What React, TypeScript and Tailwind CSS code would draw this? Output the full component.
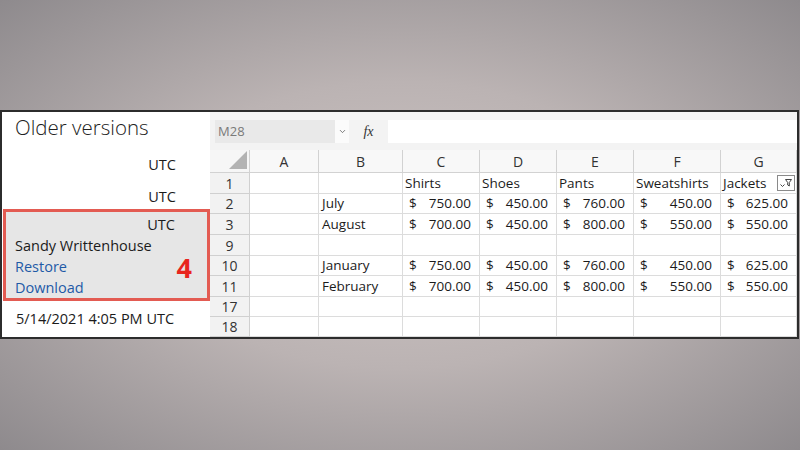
import React from 'react';
import { ChevronDown } from 'lucide-react';

type Row = {
  n: string;
  h: string;
  month?: string;
  header?: boolean;
  values?: string[];
};

const rows: Row[] = [
  { n: '1', h: 'h-[21px]', header: true },
  { n: '2', h: 'h-[20px]', month: 'July', values: ['750.00', '450.00', '760.00', '450.00', '625.00'] },
  { n: '3', h: 'h-[21px]', month: 'August', values: ['700.00', '450.00', '800.00', '550.00', '550.00'] },
  { n: '9', h: 'h-[21px]' },
  { n: '10', h: 'h-[20px]', month: 'January', values: ['750.00', '450.00', '760.00', '450.00', '625.00'] },
  { n: '11', h: 'h-[21px]', month: 'February', values: ['700.00', '450.00', '800.00', '550.00', '550.00'] },
  { n: '17', h: 'h-[20px]' },
  { n: '18', h: 'h-[20px]' },
];

const headers = ['Shirts', 'Shoes', 'Pants', 'Sweatshirts', 'Jackets'];
const cols = ['A', 'B', 'C', 'D', 'E', 'F', 'G'];

const FilterButton = () => (
  <div className="ml-auto mr-[1px] w-[18px] h-[16px] border border-[#8a8a8a] bg-white flex items-center justify-center">
    <svg width="14" height="10" viewBox="0 0 14 10">
      <path d="M1.5 6.5 L3.5 8.5 L5.5 6.5" fill="none" stroke="#444" strokeWidth="1" />
      <path d="M6.5 1.5 H12.5 L10.3 4.5 V8 L8.7 7 V4.5 Z" fill="none" stroke="#444" strokeWidth="1" />
    </svg>
  </div>
);

const Sheet = () => (
  <div className="flex-1 flex flex-col bg-[#f3f3f3] font-['Open_Sans',sans-serif]">
    <div className="h-[38px] pt-[8px] pl-[5px] flex items-start">
      <div className="w-[120px] h-[23px] bg-[#e9e9e9] flex items-center pl-[3px] text-[13px] text-[#7a7a7a]">M28</div>
      <div className="w-[14px] h-[23px] bg-[#fbfbfb] flex items-center justify-center">
        <ChevronDown size={9} strokeWidth={2} className="text-[#555]" />
      </div>
      <div className="w-[39px] h-[23px] flex items-center justify-center text-[14px] italic text-[#333] font-['Liberation_Serif',serif]">fx</div>
      <div className="flex-1 h-[23px] bg-white" />
    </div>
    <div className="grid grid-cols-[40px_69px_84px_77px_77px_77px_87px_1fr] text-[13.5px] text-[#1b1b1b]">
      <div className="h-[23px] bg-[#f6f6f6] border-r border-b border-[#d2d2d2] flex items-end justify-end pr-[2px] pb-[3px]">
        <svg width="18" height="18" viewBox="0 0 18 18">
          <path d="M18 0 L18 18 L0 18 Z" fill="#b3b3b3" />
        </svg>
      </div>
      {cols.map((c) => (
        <div key={c} className="h-[23px] bg-[#f8f8f8] border-r border-b border-[#d2d2d2] flex items-center justify-center text-[14px] text-[#333]">
          {c}
        </div>
      ))}
      {rows.map((r) => (
        <React.Fragment key={r.n}>
          <div className={`${r.h} bg-[#f2f2f2] border-r border-b border-[#d0d0d0] flex items-center justify-center text-[14px] text-[#333]`}>
            {r.n}
          </div>
          <div className={`${r.h} bg-white border-r border-b border-[#dcdcdc]`} />
          <div className={`${r.h} bg-white border-r border-b border-[#dcdcdc] flex items-center pl-[3px]`}>{r.month}</div>
          {headers.map((hd, i) => (
            <div key={hd} className={`${r.h} bg-white border-r border-b border-[#dcdcdc] flex items-center`}>
              {r.header && (
                <>
                  <span className="pl-[2px]">{hd}</span>
                  {hd === 'Jackets' && <FilterButton />}
                </>
              )}
              {r.values && (
                <div className="flex-1 flex justify-between pl-[6px] pr-[8px]">
                  <span>$</span>
                  <span>{r.values[i]}</span>
                </div>
              )}
            </div>
          ))}
        </React.Fragment>
      ))}
    </div>
  </div>
);

export default function App() {
  return (
    <div className="w-[800px] h-[450px] pt-[110px] bg-[radial-gradient(ellipse_at_center,#cdc4c3_0%,#bbb3b3_45%,#8e8a8d_100%)] overflow-hidden">
      <div className="w-[799px] h-[229px] border-2 border-[#2c2c2c] bg-white flex">
        <div className="w-[208px] flex flex-col bg-white text-[#1b1b1b] font-['Open_Sans',sans-serif]">
          <div className="h-[30px] pl-[13px] flex items-center text-[20.5px] font-light text-[#222]">Older versions</div>
          <div className="h-[12px]" />
          <div className="h-[22px] pr-[34px] flex items-center justify-end text-[14.5px]">UTC</div>
          <div className="h-[10px]" />
          <div className="h-[22px] pr-[34px] flex items-center justify-end text-[14.5px]">UTC</div>
          <div className="h-[1px]" />
          <div className="ml-[1px] h-[92px] border-[3px] border-[#e35b52] bg-[#e6e6e6] pt-[3px] flex">
            <div className="flex-1 flex flex-col text-[14.5px]">
              <div className="h-[20px] pr-[32px] flex items-center justify-end">UTC</div>
              <div className="h-[21px] pl-[9px] flex items-center">Sandy Writtenhouse</div>
              <div className="h-[22px] pl-[9px] flex items-center justify-between text-[#1f5aa6]">
                <span>Restore</span>
                <span className="pr-[15px] text-[27px] font-bold leading-none text-[#e8251e]">4</span>
              </div>
              <div className="h-[20px] pl-[9px] flex items-center text-[#1f5aa6]">Download</div>
            </div>
          </div>
          <div className="flex-1 pl-[14px] flex items-center text-[14.5px]">5/14/2021 4:05 PM UTC</div>
        </div>
        <Sheet />
      </div>
    </div>
  );
}
